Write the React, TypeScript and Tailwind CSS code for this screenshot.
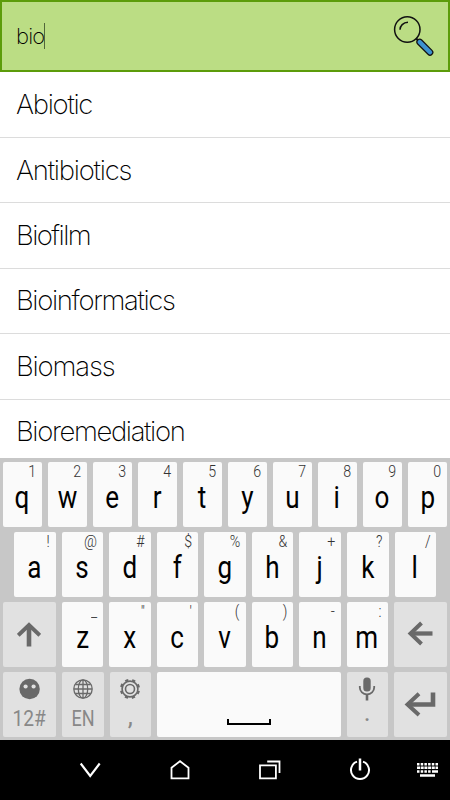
import { ReactNode } from 'react';
import clsx from 'clsx';

interface KeyData {
  label: string;
  hint: string;
}

const results = [
  { name: 'Abiotic', tracking: 'tracking-[-1.3px]' },
  { name: 'Antibiotics', tracking: 'tracking-[-1.25px]' },
  { name: 'Biofilm', tracking: 'tracking-[-1.55px]' },
  { name: 'Bioinformatics', tracking: 'tracking-[-1.35px]' },
  { name: 'Biomass', tracking: 'tracking-[-1.15px]' },
  { name: 'Bioremediation', tracking: 'tracking-[-1.37px]' },
];

// letters and their long press hints, in the same order
function toKeys(letters: string, hints: string): KeyData[] {
  return letters.split('').map((label, i) => ({ label, hint: hints[i] }));
}

const topRow = toKeys('qwertyuiop', '1234567890');
const homeRow = toKeys('asdfghjkl', '!@#$%&+?/');
const bottomRow = toKeys('zxcvbnm', '_"\'()-:');

function LetterKey({ label, hint }: KeyData) {
  return (
    <div className="relative flex h-[65px] min-w-0 flex-1 justify-center rounded-[2px] bg-[#fafafa]">
      <span className="absolute top-0 right-[6px] origin-right scale-x-[0.86] text-[16.5px] leading-[20px] font-light text-[#333]">
        {hint}
      </span>
      <span className="mt-[21px] mr-[0.5px] scale-x-[0.84] text-[31px] leading-[30px] text-black">
        {label}
      </span>
    </div>
  );
}

function GreyKey({ className, children }: { className: string; children: ReactNode }) {
  return (
    <div
      className={clsx(
        'flex h-[65px] shrink-0 flex-col items-center rounded-[2px] bg-[#e1e1e1] text-[#888]',
        className,
      )}
    >
      {children}
    </div>
  );
}

function SearchIcon() {
  return (
    <svg width="42" height="42" viewBox="0 0 42 42" fill="none">
      <circle cx="14.3" cy="14.5" r="12.7" stroke="#111" strokeWidth="1.5" />
      <path d="M7 14.8c0-4 3.2-7.3 8-7.5" stroke="#111" strokeWidth="1.5" />
      <path d="M23.2 23.5l3 3" stroke="#111" strokeWidth="2" />
      <path d="M26.7 27l10.3 10.3" stroke="#111" strokeWidth="6.8" strokeLinecap="round" />
      <path d="M26.7 27l10.3 10.3" stroke="#3c92cf" strokeWidth="4.4" strokeLinecap="round" />
    </svg>
  );
}

function Smiley() {
  return (
    <svg className="mt-[6px]" width="22" height="22" viewBox="0 0 22 22">
      <circle cx="10.6" cy="11" r="10.2" fill="#696969" />
      <circle cx="6.6" cy="8.5" r="2.1" fill="#e1e1e1" />
      <circle cx="14.6" cy="8.5" r="2.1" fill="#e1e1e1" />
    </svg>
  );
}

function Globe() {
  return (
    <svg className="mt-[6px]" width="22" height="22" viewBox="0 0 22 22" fill="none" stroke="#696969" strokeWidth="1.3">
      <circle cx="11" cy="11" r="9.2" />
      <ellipse cx="11" cy="11" rx="4.7" ry="9.2" />
      <path d="M11 2v18M2 11h18M3.5 6.5h15M3.5 15.5h15" />
    </svg>
  );
}

function Gear() {
  return (
    <svg className="mt-[6px]" width="22" height="22" viewBox="0 0 22 22" fill="none" stroke="#696969">
      <circle cx="11" cy="11" r="9.1" strokeWidth="2" strokeDasharray="3.3 3.847" transform="rotate(12 11 11)" />
      <circle cx="11" cy="11" r="7.9" strokeWidth="1.6" />
      <circle cx="11" cy="11" r="4.5" strokeWidth="1.6" />
    </svg>
  );
}

function Mic() {
  return (
    <svg className="mt-[5px]" width="18" height="24" viewBox="0 0 18 24" fill="none" stroke="#696969">
      <rect x="5.3" y="0.5" width="7.4" height="14" rx="3.5" fill="#696969" stroke="none" />
      <path d="M1.8 9v1.5a7.2 6.8 0 0 0 14.4 0V9" strokeWidth="1.8" />
      <path d="M9 17v6.5" strokeWidth="2.6" />
    </svg>
  );
}

function Keyboard() {
  return (
    <div className="flex h-[282px] shrink-0 flex-col gap-[5px] bg-[#c7c7c7] pt-[4px] font-[Roboto,sans-serif]">
      <div className="flex gap-[6px] px-[3px]">
        {topRow.map((key) => (
          <LetterKey key={key.label} {...key} />
        ))}
      </div>
      <div className="flex gap-[6px] px-[14px]">
        {homeRow.map((key) => (
          <LetterKey key={key.label} {...key} />
        ))}
      </div>
      <div className="flex gap-[6px] px-[3px]">
        <GreyKey className="w-[53px]">
          <svg className="mt-[19px] mr-[1px]" width="24" height="26" viewBox="0 0 24 26" fill="none" stroke="#696969">
            <path d="M1.2 14.3L12 4l10.8 10.3" strokeWidth="4" />
            <path d="M12 4v21.5" strokeWidth="4.6" />
          </svg>
        </GreyKey>
        {bottomRow.map((key) => (
          <LetterKey key={key.label} {...key} />
        ))}
        <GreyKey className="w-[53px]">
          <svg className="mt-[19px]" width="26" height="25" viewBox="0 0 26 25" fill="none" stroke="#696969">
            <path d="M14.5 2L3.5 12.5l11 10.5" strokeWidth="4" />
            <path d="M3.5 12.5h22" strokeWidth="4.3" />
          </svg>
        </GreyKey>
      </div>
      <div className="flex gap-[6px] px-[3px] text-[22px] leading-[26px]">
        <GreyKey className="w-[53px]">
          <Smiley />
          <span className="mt-[6px] scale-x-[0.87]">12#</span>
        </GreyKey>
        <GreyKey className="w-[41.5px]">
          <Globe />
          <span className="mt-[6px] scale-x-[0.82]">EN</span>
        </GreyKey>
        <GreyKey className="w-[41.5px]">
          <Gear />
          <span className="mt-[3px] text-[26px]">,</span>
        </GreyKey>
        <div className="flex h-[65px] flex-1 items-end justify-center rounded-[2px] bg-[#fafafa]">
          <div className="mb-[12px] h-[6px] w-[44px] border-x-2 border-b-2 border-black" />
        </div>
        <GreyKey className="w-[41.5px]">
          <Mic />
          <span className="-mt-[2px] text-[26px]">.</span>
        </GreyKey>
        <GreyKey className="w-[53px]">
          <svg className="mt-[19px] mr-[1px]" width="32" height="26" viewBox="0 0 32 26" fill="none" stroke="#696969">
            <path d="M15 2.7L3.5 13.5l11.5 10.5" strokeWidth="4" />
            <path d="M3.5 13.5h25.5V1.5" strokeWidth="4.6" />
          </svg>
        </GreyKey>
      </div>
    </div>
  );
}

function NavBar() {
  return (
    <div className="flex h-[60px] shrink-0 items-center bg-black pl-[78px]">
      <svg width="24" height="24" viewBox="0 0 24 24" fill="none" stroke="#fff" strokeWidth="2.1">
        <path d="M2.7 5.5L12.2 18l9.5-12.5" />
      </svg>
      <svg className="ml-[66px]" width="24" height="24" viewBox="0 0 24 24" fill="none" stroke="#fff" strokeWidth="1.8">
        <path d="M3.5 20.3V9.8L12 3.2l8.5 6.6V20.3z" />
      </svg>
      <svg className="ml-[66px]" width="24" height="24" viewBox="0 0 24 24" fill="none" stroke="#fff" strokeWidth="1.8">
        <path d="M2 7.3h15.9v13H2zM9.2 3.5h12.3v11.5" />
      </svg>
      <svg className="ml-[66px]" width="24" height="24" viewBox="0 0 24 24" fill="none" stroke="#fff" strokeWidth="2">
        <path d="M9 3.6a9 9 0 1 0 6 0" />
        <path d="M12 0.5v12" strokeWidth="2.5" />
      </svg>
      <svg className="ml-[44px]" width="24" height="24" viewBox="0 0 24 24" fill="none" stroke="#fff" strokeWidth="2.4">
        <path d="M1 6.2h21" strokeDasharray="2.5 1.2" />
        <path d="M1 9.8h21" strokeDasharray="3 0.7" />
        <path d="M1 13.5h14" strokeDasharray="2.5 1.2" />
        <path d="M16 13.5h6M4 17.5h15" />
      </svg>
    </div>
  );
}

export default function App() {
  return (
    <div className="flex h-[800px] w-[450px] flex-col overflow-hidden bg-white font-[Inter,sans-serif]">
      <div className="flex h-[72px] shrink-0 items-center justify-between border-[2.5px] border-[#5c9c0a] bg-[#bbdd84] pr-[13px] pl-[14px]">
        <div className="flex items-center">
          <span className="text-[22px] font-extralight tracking-[-0.8px] text-black">bio</span>
          <span className="h-[26px] w-px bg-[#51663a]" />
        </div>
        <SearchIcon />
      </div>
      <div className="flex h-[386px] shrink-0 flex-col overflow-hidden pt-[0.6px]">
        {results.map(({ name, tracking }) => (
          <div
            key={name}
            className="flex h-[65.4px] shrink-0 items-center border-b border-[#dcdcdc] pl-[16px] text-[27.5px] font-extralight text-black"
          >
            <span className={tracking}>{name}</span>
          </div>
        ))}
      </div>
      <Keyboard />
      <NavBar />
    </div>
  );
}
